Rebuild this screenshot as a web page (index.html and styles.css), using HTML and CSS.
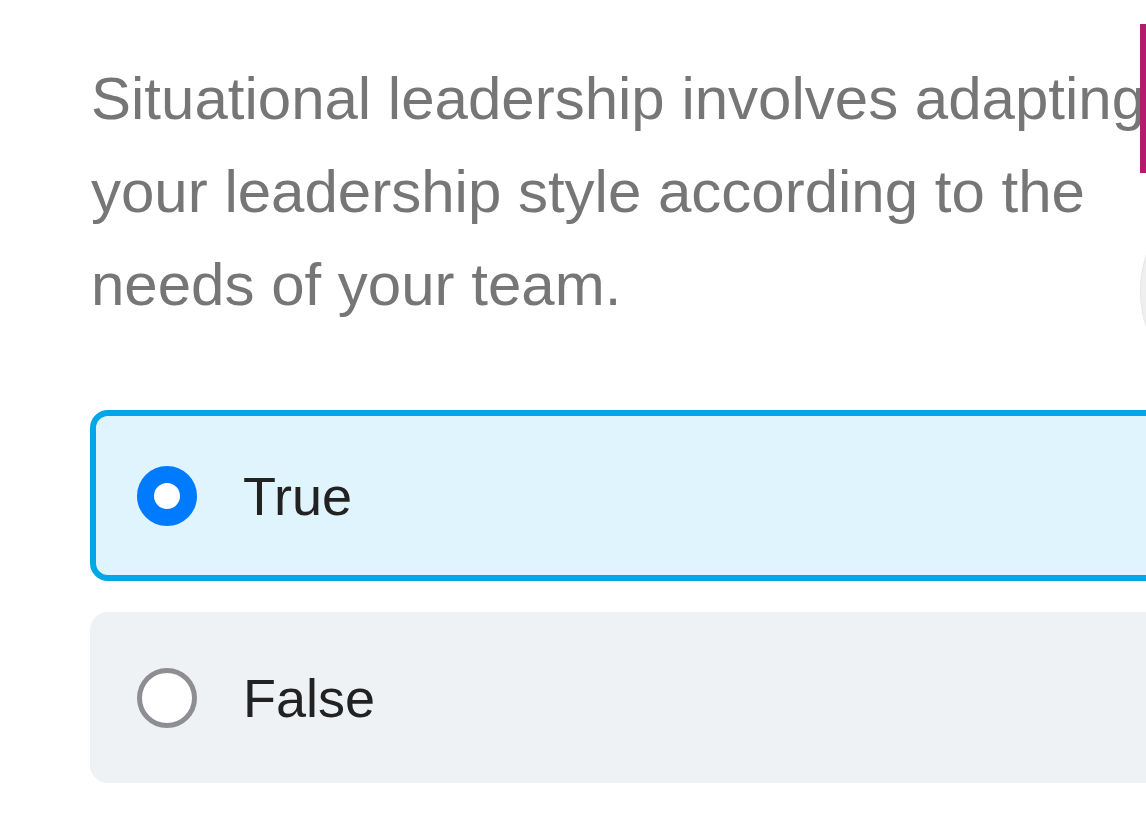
FILE: index.html
```html
<!DOCTYPE html>
<html>
<head>
<meta charset="utf-8">
<link rel="stylesheet" href="styles.css">
</head>
<body>
<div class="page">
  <main class="quiz">
    <p class="question">Situational leadership involves adapting your leadership style according to the needs of your team.</p>
    <div class="options">
      <label class="option selected">
        <span class="radio"></span>
        <span class="label">True</span>
      </label>
      <label class="option">
        <span class="radio"></span>
        <span class="label">False</span>
      </label>
    </div>
  </main>
  <div class="accent-bar"></div>
  <div class="side-circle"></div>
</div>
</body>
</html>
```

FILE: styles.css
```css
html, body {
  margin: 0;
  padding: 0;
  background: #ffffff;
  overflow: hidden;
}
.page {
  position: relative;
  width: 1146px;
  height: 823px;
  overflow: hidden;
  font-family: "Liberation Sans", Arial, Helvetica, sans-serif;
}
.quiz {
  padding: 52px 0 0 90px;
  width: 1120px;
}
.question {
  margin: 0;
  max-width: 1060px;
  font-size: 60px;
  line-height: 93px;
  color: #767676;
  padding-left: 1px;
}
.options {
  margin-top: 79px;
  display: flex;
  flex-direction: column;
  gap: 31px;
}
.option {
  display: flex;
  align-items: center;
  height: 171px;
  box-sizing: border-box;
  border: 6px solid transparent;
  border-radius: 18px;
  background: #eef2f5;
  padding-left: 41px;
}
.option.selected {
  border-color: #00a7e7;
  background: #e0f4fd;
}
.radio {
  width: 60px;
  height: 60px;
  box-sizing: border-box;
  border-radius: 50%;
  border: 5px solid #8d8d92;
  background: #ffffff;
  flex: none;
}
.option.selected .radio {
  border: 17px solid #007aff;
}
.label {
  margin-left: 46px;
  font-size: 54px;
  color: #222222;
}
.accent-bar {
  position: absolute;
  left: 1140px;
  top: 24px;
  width: 6px;
  height: 149px;
  background: #b41b6c;
}
.side-circle {
  position: absolute;
  left: 1140px;
  top: 180px;
  width: 222px;
  height: 222px;
  border-radius: 50%;
  background: #efefef;
  box-shadow: inset 0 0 0 1px #e6e6e6;
}
```
